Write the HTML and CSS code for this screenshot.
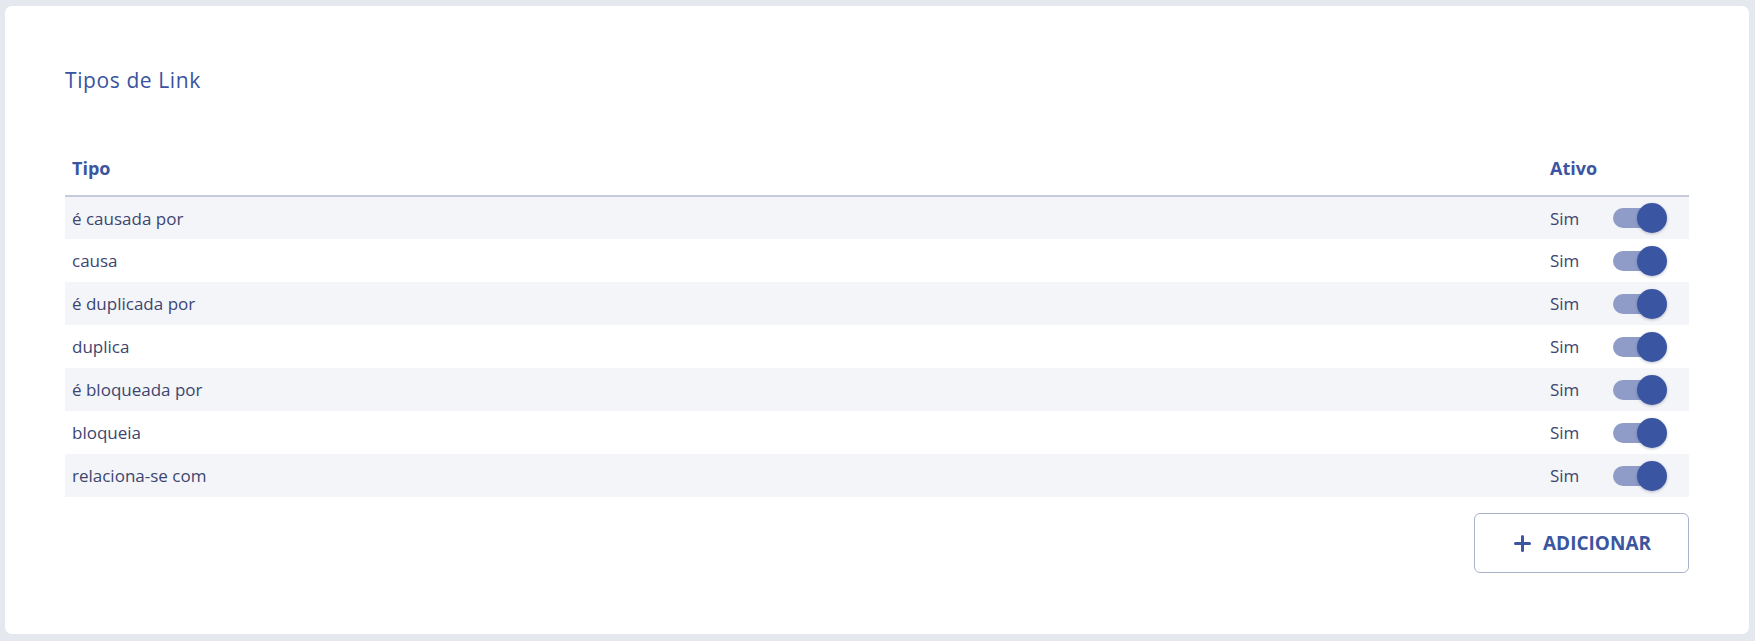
FILE: index.html
```html
<!DOCTYPE html>
<html lang="pt">
<head>
<meta charset="utf-8">
<title>Tipos de Link</title>
<link rel="stylesheet" href="styles.css">
</head>
<body>
<main class="card">
  <h1 class="title">Tipos de Link</h1>
  <table class="links">
    <thead>
      <tr><th class="col-type">Tipo</th><th class="col-active">Ativo</th></tr>
    </thead>
    <tbody>
      <tr><td>é causada por</td><td class="active"><span class="active-cell"><span class="sim">Sim</span><span class="switch"><span class="track"></span><span class="thumb"></span></span></span></td></tr>
      <tr><td>causa</td><td class="active"><span class="active-cell"><span class="sim">Sim</span><span class="switch"><span class="track"></span><span class="thumb"></span></span></span></td></tr>
      <tr><td>é duplicada por</td><td class="active"><span class="active-cell"><span class="sim">Sim</span><span class="switch"><span class="track"></span><span class="thumb"></span></span></span></td></tr>
      <tr><td>duplica</td><td class="active"><span class="active-cell"><span class="sim">Sim</span><span class="switch"><span class="track"></span><span class="thumb"></span></span></span></td></tr>
      <tr><td>é bloqueada por</td><td class="active"><span class="active-cell"><span class="sim">Sim</span><span class="switch"><span class="track"></span><span class="thumb"></span></span></span></td></tr>
      <tr><td>bloqueia</td><td class="active"><span class="active-cell"><span class="sim">Sim</span><span class="switch"><span class="track"></span><span class="thumb"></span></span></span></td></tr>
      <tr><td>relaciona-se com</td><td class="active"><span class="active-cell"><span class="sim">Sim</span><span class="switch"><span class="track"></span><span class="thumb"></span></span></span></td></tr>
    </tbody>
  </table>
  <div class="actions">
    <button class="add-btn" type="button">
      <svg class="plus" width="17" height="17" viewBox="0 0 17 17"><path d="M8.5 1.5v14M1.5 8.5h14" stroke="#3b55a0" stroke-width="3" stroke-linecap="round"/></svg>
      <span>ADICIONAR</span>
    </button>
  </div>
</main>
</body>
</html>
```
FILE: styles.css
```css
* { box-sizing: border-box; }
html, body { margin: 0; }
body {
  background: #e6e8ef;
  padding: 6px 6px 7px 5px;
  font-family: "Open Sans", "Noto Sans", sans-serif;
  color: #3b4670;
}
.card {
  background: #ffffff;
  border-radius: 7px;
  height: 628px;
  padding: 60px 60px 61px 60px;
}
.title {
  margin: 0;
  font-size: 21px;
  line-height: 28px;
  font-weight: 400;
  letter-spacing: 0.6px;
  color: #3a53a0;
}
.links {
  margin-top: 46px;
  width: 100%;
  border-collapse: collapse;
  font-size: 17px;
}
.links th {
  text-align: left;
  font-weight: 700;
  font-size: 18px;
  color: #3b55a0;
  height: 56px;
  padding: 0 7px;
  border-bottom: 2px solid #c6cadc;
}
.links .col-active { width: 146px; }
.links td {
  height: 43px;
  padding: 0 7px;
  color: #3b4670;
}
.links tbody tr:nth-child(odd) td { background: #f4f5f8; }
.active-cell {
  display: flex;
  align-items: center;
}
.sim { width: 63px; }
.switch {
  position: relative;
  width: 54px;
  height: 30px;
  display: inline-block;
}
.track {
  position: absolute;
  left: 0;
  top: 5px;
  width: 50px;
  height: 20px;
  border-radius: 10px;
  background: #8f9cc7;
}
.thumb {
  position: absolute;
  left: 24px;
  top: 0;
  width: 30px;
  height: 30px;
  border-radius: 50%;
  background: #3a56a3;
  box-shadow: 0 1px 3px rgba(40, 50, 90, 0.3);
}
.actions {
  display: flex;
  justify-content: flex-end;
  margin-top: 16px;
}
.add-btn {
  width: 215px;
  height: 60px;
  border: 1px solid #aab2cc;
  border-radius: 6px;
  background: #fff;
  display: flex;
  align-items: center;
  justify-content: center;
  gap: 12px;
  font-family: "Open Sans", "Noto Sans", sans-serif;
  font-weight: 700;
  font-size: 19px;
  color: #3b55a0;
  padding: 0 0 0 2px;
}
```
